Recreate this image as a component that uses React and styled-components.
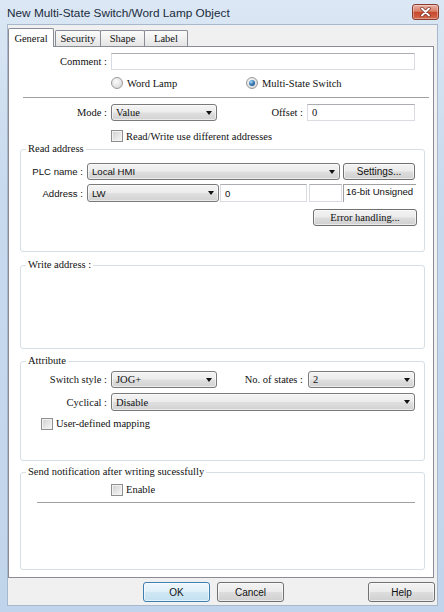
import React from 'react';
import styled, { createGlobalStyle } from 'styled-components';

const SERIF = `"Liberation Serif", "Times New Roman", serif`;
const SANS = `"Liberation Sans", Arial, sans-serif`;

const GlobalStyle = createGlobalStyle`
  html, body { margin: 0; padding: 0; background: #fff; }
  body { width: 444px; height: 612px; overflow: hidden; }
  * { box-sizing: border-box; }
`;

const Window = styled.div`
  width: 444px;
  height: 612px;
  display: flex;
  flex-direction: column;
  background: linear-gradient(180deg, #dbe7f4 0%, #c8daee 30%, #c0d4eb 100%);
  font-family: ${SERIF};
  font-size: 10.5px;
  color: #111;
`;

const TitleBar = styled.div`
  height: 24px;
  flex: none;
  display: flex;
  justify-content: space-between;
  align-items: flex-start;
  padding: 0 5px 0 7px;
`;

const Title = styled.div`
  font-family: ${SANS};
  font-size: 11.8px;
  line-height: 14px;
  padding-top: 6px;
  color: #1b2b3c;
`;

const CloseButton = styled.div`
  margin-top: 4px;
  width: 27px;
  height: 16px;
  border: 1px solid #8a3b2f;
  border-radius: 3px;
  background: linear-gradient(180deg, #eab0a2 0%, #d9806a 45%, #c7482d 52%, #d3684c 100%);
  box-shadow: inset 0 0 0 1px rgba(255, 255, 255, 0.35);
  display: flex;
  align-items: center;
  justify-content: center;
`;

const Client = styled.div`
  flex: 1;
  margin: 0 6px 6px 7px;
  border: 1px solid #a7b8cc;
  background: #f0f0f0;
  display: flex;
  flex-direction: column;
`;

const TabRow = styled.div`
  height: 21px;
  flex: none;
  display: flex;
  align-items: flex-end;
`;

const Tab = styled.div`
  position: relative;
  z-index: ${(p) => (p.$active ? 2 : 1)};
  width: ${(p) => p.$w}px;
  height: ${(p) => (p.$active ? 19 : 16)}px;
  margin-left: ${(p) => p.$ml || 0}px;
  margin-bottom: ${(p) => (p.$active ? -1 : 0)}px;
  border: 1px solid #898c95;
  border-bottom: none;
  border-radius: 2px 2px 0 0;
  background: ${(p) => (p.$active ? '#fff' : 'linear-gradient(180deg, #fbfbfb 0%, #eeeeee 60%, #e4e4e4 100%)')};
  display: flex;
  align-items: center;
  justify-content: center;
  white-space: nowrap;
`;

const Panel = styled.div`
  width: 426px;
  height: 532px;
  flex: none;
  background: #fff;
  border: 1px solid #898c95;
  display: flex;
  flex-direction: column;
`;

const Row = styled.div`
  flex: none;
  display: flex;
  align-items: center;
  justify-content: ${(p) => (p.$end ? 'flex-end' : 'flex-start')};
  height: ${(p) => p.$h || 17}px;
  margin-top: ${(p) => p.$mt || 0}px;
  padding-left: ${(p) => p.$pl || 0}px;
  padding-right: ${(p) => p.$pr || 0}px;
`;

const Label = styled.span`
  flex: none;
  width: ${(p) => p.$w}px;
  margin-right: ${(p) => (p.$mr === undefined ? 4 : p.$mr)}px;
  text-align: right;
  white-space: nowrap;
  font-family: ${(p) => (p.$sans ? SANS : SERIF)};
  font-size: ${(p) => (p.$sans ? '9.6px' : '10.5px')};
`;

const Field = styled.input`
  flex: none;
  width: ${(p) => p.$w}px;
  height: 100%;
  margin: 0 0 0 ${(p) => p.$ml || 0}px;
  padding: 0 4px;
  border: 1px solid #dadce2;
  border-top-color: #abadb3;
  background: #fff;
  font-family: ${(p) => (p.$sans ? SANS : SERIF)};
  font-size: ${(p) => (p.$sans ? '9.6px' : '10.5px')};
  color: #111;
  outline: none;
`;

const Combo = styled.div`
  flex: none;
  width: ${(p) => p.$w}px;
  height: 100%;
  border: 1px solid #7a7a7a;
  border-radius: 3px;
  background: linear-gradient(180deg, #f4f4f4 0%, #ececec 48%, #dfdfdf 52%, #d2d2d2 100%);
  box-shadow: inset 0 0 0 1px rgba(255, 255, 255, 0.55);
  display: flex;
  align-items: center;
  justify-content: space-between;
  padding: 0 4px 0 4px;
  font-family: ${(p) => (p.$sans ? SANS : SERIF)};
  font-size: ${(p) => (p.$sans ? '9.6px' : '10.5px')};
  white-space: nowrap;
`;

const Arrow = styled.span`
  width: 0;
  height: 0;
  border-left: 3.5px solid transparent;
  border-right: 3.5px solid transparent;
  border-top: 4px solid #111;
`;

const Button = styled.button`
  flex: none;
  width: ${(p) => p.$w}px;
  height: 100%;
  margin: 0 0 0 ${(p) => (p.$auto ? 'auto' : `${p.$ml || 0}px`)};
  padding: 0;
  border: 1px solid ${(p) => (p.$default ? '#3c7fb1' : '#707070')};
  border-radius: 3px;
  background: ${(p) =>
    p.$default
      ? 'linear-gradient(180deg, #eef7fc 0%, #e0f0f9 48%, #d0e8f5 52%, #c3e0f0 100%)'
      : 'linear-gradient(180deg, #f3f3f3 0%, #ebebeb 48%, #dddddd 52%, #cfcfcf 100%)'};
  box-shadow: inset 0 0 0 1px rgba(255, 255, 255, 0.6);
  font-family: ${(p) => (p.$serif ? SERIF : SANS)};
  font-size: ${(p) => (p.$serif ? '10.5px' : '10px')};
  color: #111;
`;

const StaticText = styled.div`
  flex: none;
  width: ${(p) => p.$w}px;
  height: 100%;
  margin-left: ${(p) => p.$ml || 0}px;
  border-top: 1px solid #a0a0a0;
  border-left: 1px solid #a0a0a0;
  padding: 1px 0 0 2px;
  font-family: ${SANS};
  font-size: 9.6px;
  white-space: nowrap;
`;

const Choice = styled.label`
  flex: none;
  width: ${(p) => (p.$w ? `${p.$w}px` : 'auto')};
  height: 100%;
  display: flex;
  align-items: center;
  white-space: nowrap;
`;

const RadioMark = styled.span`
  flex: none;
  width: 12px;
  height: 12px;
  margin-right: 4px;
  border-radius: 50%;
  border: 1px solid #9a9a9a;
  background: radial-gradient(circle at 40% 35%, #fbfbfb 0%, #e2e2e2 60%, #cbcbcb 100%);
  display: flex;
  align-items: center;
  justify-content: center;
  &::after {
    content: '';
    display: ${(p) => (p.$checked ? 'block' : 'none')};
    width: 6px;
    height: 6px;
    border-radius: 50%;
    background: radial-gradient(circle at 35% 30%, #a9d8f5 0%, #3479b4 50%, #163f6a 100%);
  }
`;

const CheckMark = styled.span`
  flex: none;
  width: 12px;
  height: 12px;
  margin-right: 3px;
  border: 1px solid #8f8f8f;
  background: linear-gradient(135deg, #cfcfcf 0%, #e6e6e6 55%, #f8f8f8 100%);
  box-shadow: inset 0 0 0 1px #f2f2f2;
`;

const Separator = styled.div`
  flex: none;
  height: 1px;
  background: #a0a0a0;
  margin: ${(p) => p.$mt || 0}px ${(p) => p.$mr || 0}px 0 ${(p) => p.$ml || 0}px;
`;

const Group = styled.fieldset`
  flex: none;
  display: flex;
  flex-direction: column;
  margin: ${(p) => p.$mt}px 8px 0 11px;
  padding: 0;
  height: ${(p) => p.$h}px;
  min-inline-size: 0;
  border: 1px solid #d5dfe5;
  border-radius: 3px;
`;

const Legend = styled.legend`
  margin-left: 5px;
  padding: 0 2px;
  line-height: 12px;
  white-space: nowrap;
`;

const ButtonBar = styled.div`
  flex: none;
  display: flex;
  height: 20px;
  margin-top: 4px;
  padding: 0 2px 0 135px;
  gap: 7px;
`;

const CloseGlyph = () => (
  <svg width="11" height="10" viewBox="0 0 11 10">
    <path d="M2 1.5 L9 8.5 M9 1.5 L2 8.5" stroke="#6b2a20" strokeWidth="3.2" strokeLinecap="round" />
    <path d="M2 1.5 L9 8.5 M9 1.5 L2 8.5" stroke="#fff" strokeWidth="1.9" strokeLinecap="round" />
  </svg>
);

const Select = ({ w, sans, children }) => (
  <Combo $w={w} $sans={sans}>
    <span>{children}</span>
    <Arrow />
  </Combo>
);

export default function App() {
  return (
    <>
      <GlobalStyle />
      <Window>
        <TitleBar>
          <Title>New Multi-State Switch/Word Lamp Object</Title>
          <CloseButton>
            <CloseGlyph />
          </CloseButton>
        </TitleBar>
        <Client>
          <TabRow>
            <Tab $active $w={46}>General</Tab>
            <Tab $w={46} $ml={1}>Security</Tab>
            <Tab $w={45} $ml={-1}>Shape</Tab>
            <Tab $w={44} $ml={-1}>Label</Tab>
          </TabRow>
          <Panel>
            <Row $mt={6} $h={17}>
              <Label $w={98}>Comment :</Label>
              <Field $w={304} readOnly />
            </Row>
            <Row $mt={5} $h={16} $pl={102}>
              <Choice $w={135}>
                <RadioMark />
                Word Lamp
              </Choice>
              <Choice>
                <RadioMark $checked />
                Multi-State Switch
              </Choice>
            </Row>
            <Separator $mt={6} $ml={14} $mr={4} />
            <Row $mt={6} $h={17}>
              <Label $w={98}>Mode :</Label>
              <Select w={106}>Value</Select>
              <Label $w={86}>Offset :</Label>
              <Field $w={108} defaultValue="0" readOnly />
            </Row>
            <Row $mt={9} $h={12} $pl={102}>
              <Choice>
                <CheckMark />
                Read/Write use different addresses
              </Choice>
            </Row>

            <Group $mt={1} $h={109}>
              <Legend>Read address</Legend>
              <Row $mt={8} $h={17}>
                <Label $w={62} $sans>PLC name :</Label>
                <Select w={253} sans>Local HMI</Select>
                <Button $w={72} $ml={3}>Settings...</Button>
              </Row>
              <Row $mt={4} $h={18}>
                <Label $w={62} $sans>Address :</Label>
                <Select w={132} sans>LW</Select>
                <Field $w={87} $ml={1} $sans defaultValue="0" readOnly />
                <Field $w={33} $ml={2} readOnly />
                <StaticText $w={73} $ml={1}>16-bit Unsigned</StaticText>
              </Row>
              <Row $mt={7} $h={17} $end $pr={7}>
                <Button $w={104} $serif>Error handling...</Button>
              </Row>
            </Group>

            <Group $mt={7} $h={90}>
              <Legend>Write address :</Legend>
            </Group>

            <Group $mt={6} $h={106}>
              <Legend>Attribute</Legend>
              <Row $mt={4} $h={17}>
                <Label $w={86}>Switch style :</Label>
                <Select w={106}>JOG+</Select>
                <Label $w={86} $mr={5}>No. of states :</Label>
                <Select w={107}>2</Select>
              </Row>
              <Row $mt={5} $h={18}>
                <Label $w={86}>Cyclical :</Label>
                <Select w={304}>Disable</Select>
              </Row>
              <Row $mt={6} $h={13} $pl={20}>
                <Choice>
                  <CheckMark />
                  User-defined mapping
                </Choice>
              </Row>
            </Group>

            <Group $mt={5} $h={104}>
              <Legend>Send notification after writing sucessfully</Legend>
              <Row $mt={5} $h={13} $pl={90}>
                <Choice>
                  <CheckMark />
                  Enable
                </Choice>
              </Row>
              <Separator $mt={6} $ml={16} $mr={9} />
            </Group>
          </Panel>
          <ButtonBar>
            <Button $w={67} $default>OK</Button>
            <Button $w={67}>Cancel</Button>
            <Button $w={67} $auto>Help</Button>
          </ButtonBar>
        </Client>
      </Window>
    </>
  );
}
